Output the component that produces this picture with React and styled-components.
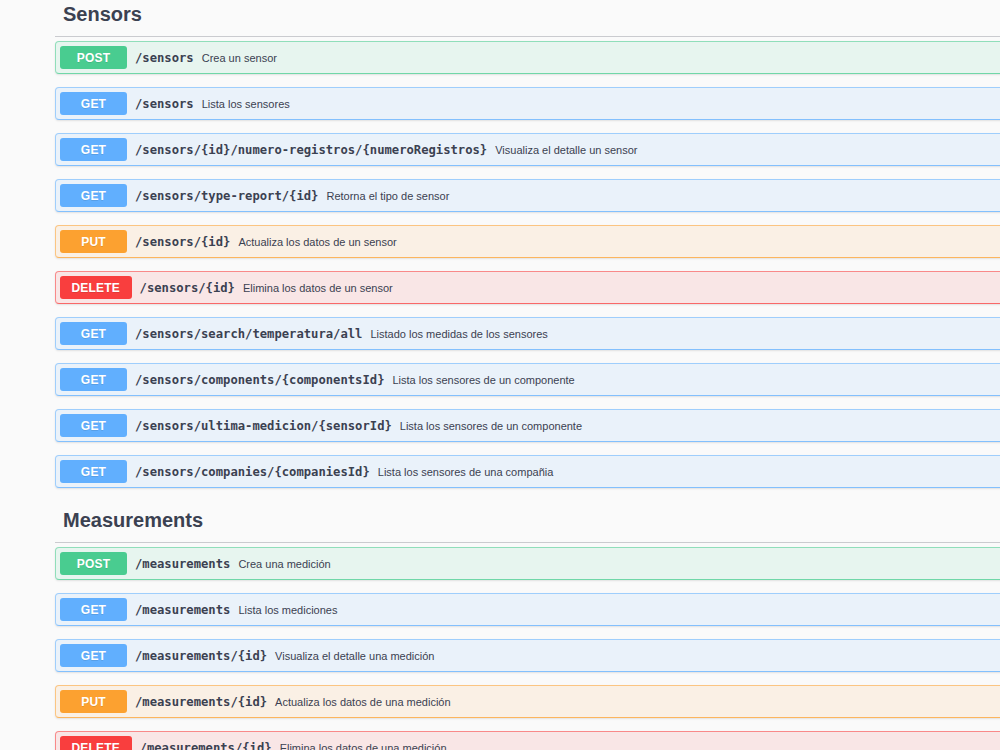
import React from "react";
import styled, { createGlobalStyle } from "styled-components";

const Global = createGlobalStyle`
  html, body { margin: 0; padding: 0; background: #fafafa; overflow: hidden; }
  body { font-family: "Liberation Sans", Arial, sans-serif; color: #3b4151; }
`;

const METHODS = {
  POST: { solid: "#49cc90", rgb: "73,204,144" },
  GET: { solid: "#61affe", rgb: "97,175,254" },
  PUT: { solid: "#fca130", rgb: "252,161,48" },
  DELETE: { solid: "#f93e3e", rgb: "249,62,62" },
};

const Page = styled.div`
  margin-top: -5px;
  padding-left: 55px;
  width: 960px;
`;

const Section = styled.section`
  display: flex;
  flex-direction: column;
`;

const TagHeader = styled.h4`
  margin: 0 0 4px;
  padding: 7px 0 10px 8px;
  font-size: 20px;
  line-height: 24px;
  font-weight: 700;
  color: #3b4151;
  border-bottom: 1px solid rgba(59, 65, 81, 0.25);
`;

const OpBlock = styled.div`
  box-sizing: border-box;
  height: 33px;
  margin-bottom: 13px;
  display: flex;
  align-items: center;
  padding: 0 4px;
  border-radius: 4px;
  border: 1px solid rgba(${(p) => p.$rgb}, 0.55);
  border-bottom-color: rgba(${(p) => p.$rgb}, 0.75);
  background: rgba(${(p) => p.$rgb}, 0.1);
  box-shadow: 0 1px 2px rgba(0, 0, 0, 0.1);
`;

const Badge = styled.span`
  box-sizing: border-box;
  min-width: 67px;
  height: 23px;
  padding: 0 11.5px;
  display: flex;
  align-items: center;
  justify-content: center;
  border-radius: 3px;
  background: ${(p) => p.$color};
  color: #fff;
  font-family: "Liberation Sans", Arial, sans-serif;
  font-weight: 700;
  font-size: 12px;
  letter-spacing: 0.2px;
  text-shadow: 0 1px 0 rgba(0, 0, 0, 0.1);
`;

const Path = styled.span`
  padding: 0 8px;
  font-family: "DejaVu Sans Mono", monospace;
  font-weight: 700;
  font-size: 12.2px;
  color: #3b4151;
  white-space: nowrap;
`;

const Desc = styled.span`
  font-family: "Liberation Sans", Arial, sans-serif;
  font-size: 11px;
  color: #3b4151;
  white-space: nowrap;
`;

const sections = [
  {
    name: "Sensors",
    ops: [
      ["POST", "/sensors", "Crea un sensor"],
      ["GET", "/sensors", "Lista los sensores"],
      ["GET", "/sensors/{id}/numero-registros/{numeroRegistros}", "Visualiza el detalle un sensor"],
      ["GET", "/sensors/type-report/{id}", "Retorna el tipo de sensor"],
      ["PUT", "/sensors/{id}", "Actualiza los datos de un sensor"],
      ["DELETE", "/sensors/{id}", "Elimina los datos de un sensor"],
      ["GET", "/sensors/search/temperatura/all", "Listado los medidas de los sensores"],
      ["GET", "/sensors/components/{componentsId}", "Lista los sensores de un componente"],
      ["GET", "/sensors/ultima-medicion/{sensorId}", "Lista los sensores de un componente"],
      ["GET", "/sensors/companies/{companiesId}", "Lista los sensores de una compañia"],
    ],
  },
  {
    name: "Measurements",
    ops: [
      ["POST", "/measurements", "Crea una medición"],
      ["GET", "/measurements", "Lista los mediciones"],
      ["GET", "/measurements/{id}", "Visualiza el detalle una medición"],
      ["PUT", "/measurements/{id}", "Actualiza los datos de una medición"],
      ["DELETE", "/measurements/{id}", "Elimina los datos de una medición"],
    ],
  },
];

export default function App() {
  return (
    <>
      <Global />
      <Page>
        {sections.map((s) => (
          <Section key={s.name}>
            <TagHeader>{s.name}</TagHeader>
            {s.ops.map(([m, path, desc], i) => (
              <OpBlock key={i} $rgb={METHODS[m].rgb}>
                <Badge $color={METHODS[m].solid}>{m}</Badge>
                <Path>{path}</Path>
                <Desc>{desc}</Desc>
              </OpBlock>
            ))}
          </Section>
        ))}
      </Page>
    </>
  );
}
